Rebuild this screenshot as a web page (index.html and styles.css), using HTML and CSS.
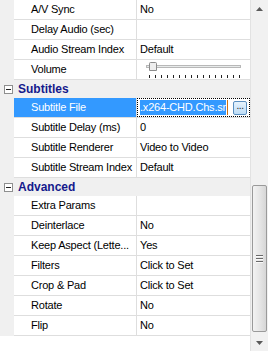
FILE: index.html
```html
<!DOCTYPE html>
<html>
<head>
<meta charset="utf-8">
<link rel="stylesheet" href="styles.css">
</head>
<body>
<div class="pane">
  <div class="grid">
    <div class="row"><div class="band"></div><div class="name">A/V Sync</div><div class="value">No</div></div>
    <div class="row"><div class="band"></div><div class="name">Delay Audio (sec)</div><div class="value"></div></div>
    <div class="row"><div class="band"></div><div class="name">Audio Stream Index</div><div class="value">Default</div></div>
    <div class="row"><div class="band"></div><div class="name">Volume</div><div class="value slider-cell">
      <svg class="slider" width="112" height="19" viewBox="0 0 112 19">
        <rect x="9.5" y="5.5" width="94" height="2" fill="#e7eaea" stroke="#b8b8b8" stroke-width="1"/>
        <path d="M13.5 2.5 h5 a1 1 0 0 1 1 1 v7 h-7 v-7 a1 1 0 0 1 1 -1z" fill="#eeeeee" stroke="#8c8c8c" stroke-width="1"/>
        <g fill="#222">
          <rect x="12" y="15" width="1" height="3"/><rect x="18" y="15" width="1" height="3"/><rect x="24" y="15" width="1" height="3"/><rect x="30" y="15" width="1" height="3"/>
          <rect x="36" y="15" width="1" height="3"/><rect x="42" y="15" width="1" height="3"/><rect x="48" y="15" width="1" height="3"/><rect x="54" y="15" width="1" height="3"/>
          <rect x="60" y="15" width="1" height="3"/><rect x="66" y="15" width="1" height="3"/><rect x="72" y="15" width="1" height="3"/><rect x="78" y="15" width="1" height="3"/>
          <rect x="84" y="15" width="1" height="3"/><rect x="90" y="15" width="1" height="3"/><rect x="96" y="15" width="1" height="3"/><rect x="102" y="15" width="1" height="3"/>
        </g>
      </svg>
    </div></div>

    <div class="group"><span class="toggle"></span><span class="gtitle">Subtitles</span></div>
    <div class="row selected"><div class="band"></div><div class="name">Subtitle File</div><div class="value edit-cell">
      <div class="editbox"><span class="seltext">.x264-CHD.Chs.sr</span><span class="caret"></span><span class="dots">...</span></div>
    </div></div>
    <div class="row"><div class="band"></div><div class="name">Subtitle Delay (ms)</div><div class="value">0</div></div>
    <div class="row"><div class="band"></div><div class="name">Subtitle Renderer</div><div class="value">Video to Video</div></div>
    <div class="row"><div class="band"></div><div class="name">Subtitle Stream Index</div><div class="value">Default</div></div>

    <div class="group"><span class="toggle"></span><span class="gtitle">Advanced</span></div>
    <div class="row"><div class="band"></div><div class="name">Extra Params</div><div class="value"></div></div>
    <div class="row"><div class="band"></div><div class="name">Deinterlace</div><div class="value">No</div></div>
    <div class="row"><div class="band"></div><div class="name">Keep Aspect (Lette...</div><div class="value">Yes</div></div>
    <div class="row"><div class="band"></div><div class="name">Filters</div><div class="value">Click to Set</div></div>
    <div class="row"><div class="band"></div><div class="name">Crop &amp; Pad</div><div class="value">Click to Set</div></div>
    <div class="row"><div class="band"></div><div class="name">Rotate</div><div class="value">No</div></div>
    <div class="row"><div class="band"></div><div class="name">Flip</div><div class="value">No</div></div>
  </div>
  <div class="scrollbar">
    <div class="sbtn"><svg width="7" height="4" viewBox="0 0 7 4"><path d="M0 4 L3.5 0 L7 4z" fill="#5a5a5a"/></svg></div>
    <div class="track">
      <div class="thumb"><div class="grip"><i></i><i></i><i></i></div></div>
    </div>
    <div class="sbtn down"><svg width="7" height="4" viewBox="0 0 7 4"><path d="M0 0 L3.5 4 L7 0z" fill="#5a5a5a"/></svg></div>
  </div>
</div>
</body>
</html>
```

FILE: styles.css
```css
html, body {
  margin: 0;
  padding: 0;
  background: #ffffff;
}
body {
  font-family: "Liberation Sans", Arial, sans-serif;
  font-size: 11px;
  letter-spacing: -0.2px;
  color: #000;
}
.pane {
  display: flex;
  width: 268px;
  height: 351px;
  overflow: hidden;
}
.grid {
  width: 250px;
  flex: none;
  display: flex;
  flex-direction: column;
}
.row {
  display: flex;
  height: 20px;
  flex: none;
}
.band {
  width: 14px;
  flex: none;
  background: #f0f0f0;
}
.name {
  width: 123px;
  flex: none;
  box-sizing: border-box;
  padding-left: 17px;
  border-right: 1px solid #dedede;
  border-bottom: 1px solid #dedede;
  line-height: 19px;
  white-space: nowrap;
  overflow: hidden;
}
.value {
  flex: 1;
  min-width: 0;
  box-sizing: border-box;
  padding-left: 3px;
  border-bottom: 1px solid #dedede;
  line-height: 19px;
  white-space: nowrap;
  overflow: hidden;
}
.slider-cell {
  padding-left: 0;
}
.slider {
  display: block;
}
.selected .name {
  background: #3399ff;
  color: #fff;
}
.edit-cell {
  padding: 0;
}
.editbox {
  height: 19px;
  box-sizing: border-box;
  border: 1px dotted #000;
  display: flex;
  align-items: center;
  padding-left: 2px;
}
.seltext {
  display: block;
  flex: none;
  background: #3399ff;
  color: #fff;
  line-height: 15px;
  height: 15px;
  white-space: nowrap;
}
.caret {
  width: 1px;
  height: 15px;
  background: #d07010;
  flex: none;
  margin-left: 1px;
}
.dots {
  margin-left: auto;
  margin-right: 2px;
  width: 14px;
  height: 14px;
  box-sizing: border-box;
  border: 1px solid #5a8fc0;
  border-radius: 2px;
  background: linear-gradient(#e6f3fd, #bcdcf6);
  font-size: 10px;
  line-height: 8px;
  text-align: center;
  color: #222;
  letter-spacing: -0.5px;
  flex: none;
}
.group {
  display: flex;
  align-items: center;
  height: 18px;
  flex: none;
  background: #f0f0f0;
}
.toggle {
  width: 9px;
  height: 9px;
  box-sizing: border-box;
  margin-left: 4px;
  margin-right: 5px;
  border: 1px solid #8e8f8f;
  background: #fff;
  position: relative;
}
.toggle::after {
  content: "";
  position: absolute;
  left: 1px;
  top: 3px;
  width: 5px;
  height: 1px;
  background: #222;
}
.gtitle {
  font-weight: bold;
  font-size: 12px;
  letter-spacing: 0;
  color: #141a8c;
}
.scrollbar {
  width: 18px;
  flex: none;
  display: flex;
  flex-direction: column;
  background: #f1f1f1;
  box-sizing: border-box;
  border-left: 1px solid #e2e2e2;
}
.sbtn {
  height: 17px;
  flex: none;
  display: flex;
  align-items: center;
  justify-content: center;
}
.sbtn svg {
  display: block;
}
.track {
  flex: 1;
  display: flex;
  flex-direction: column;
}
.thumb {
  margin-top: 168px;
  margin-left: 1px;
  width: 15px;
  height: 147px;
  box-sizing: border-box;
  border: 1px solid #9a9a9a;
  border-radius: 2px;
  background: linear-gradient(to right, #f3f3f3, #e6e6e6 50%, #d6d6d6);
  display: flex;
  align-items: center;
  justify-content: center;
}
.grip {
  display: flex;
  flex-direction: column;
  gap: 1px;
}
.grip i {
  display: block;
  width: 7px;
  height: 1px;
  background: #6a6a6a;
  border-bottom: 1px solid #fafafa;
}
```
